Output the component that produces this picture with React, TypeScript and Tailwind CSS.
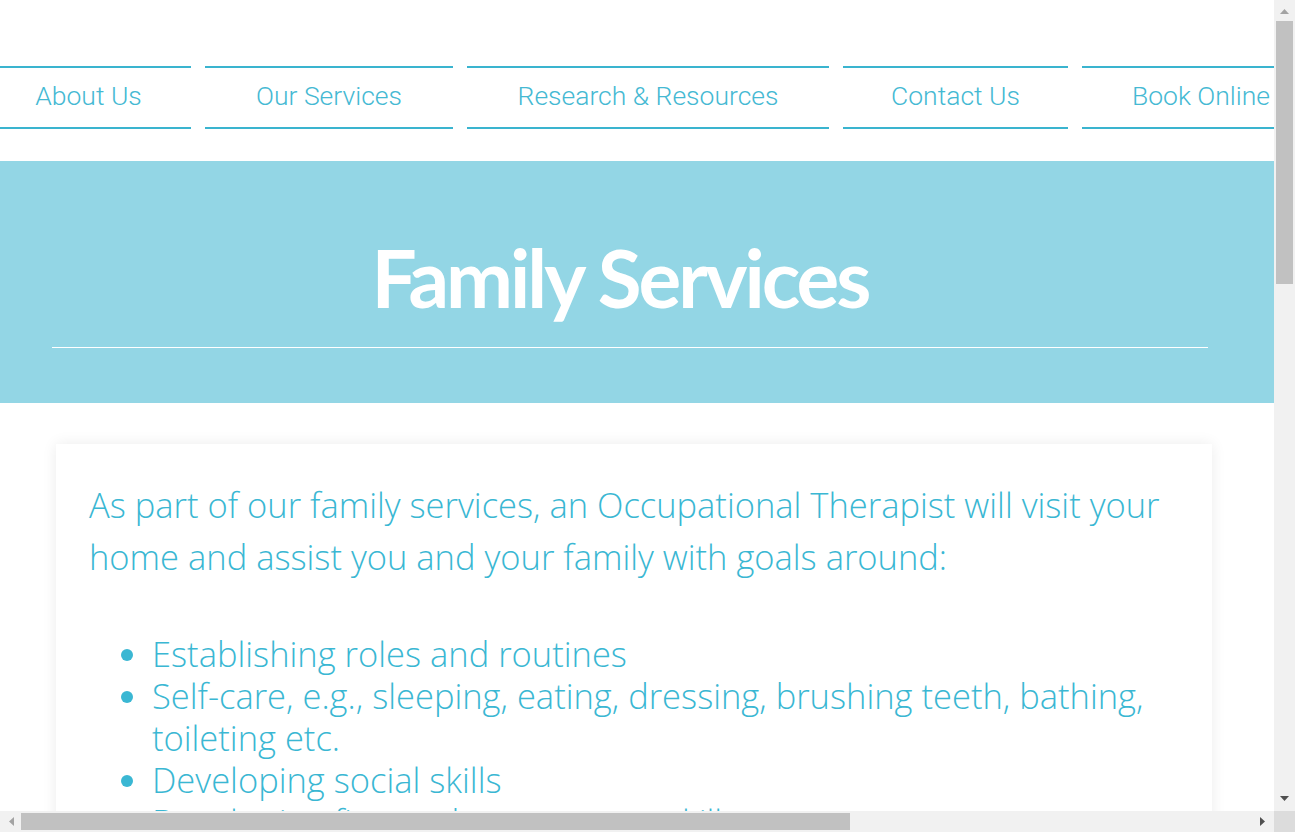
const NAV_ITEMS = [
  { label: 'About Us', width: 'w-[205px]' },
  { label: 'Our Services', width: 'w-[248px]' },
  { label: 'Research & Resources', width: 'w-[362px]' },
  { label: 'Contact Us', width: 'w-[225px]' },
  { label: 'Book Online', width: 'w-[238px]' },
]

const GOALS = [
  'Establishing roles and routines',
  'Self-care, e.g., sleeping, eating, dressing, brushing teeth, bathing, toileting etc.',
  'Developing social skills',
  'Developing fine and gross motor skills',
  'Play and leisure skills',
  'Managing emotions and behaviour',
]

function Arrow({ dir, dark }: { dir: 'up' | 'down' | 'left' | 'right'; dark?: boolean }) {
  const points = {
    up: '0,5 4.5,0 9,5',
    down: '0,0 9,0 4.5,5',
    left: '5,0 5,9 0,4.5',
    right: '0,0 5,4.5 0,9',
  }[dir]
  const vertical = dir === 'up' || dir === 'down'
  return (
    <svg
      width={vertical ? 9 : 5}
      height={vertical ? 5 : 9}
      viewBox={vertical ? '0 0 9 5' : '0 0 5 9'}
      className={dark ? 'fill-[#505050]' : 'fill-[#a3a3a3]'}
    >
      <polygon points={points} />
    </svg>
  )
}

function Page() {
  return (
    <div className="w-[1906px] bg-white font-['Open_Sans',sans-serif]">
      {/* Top navigation */}
      <nav className="-ml-[14px] flex gap-[14px] pt-[66px] font-['Roboto',sans-serif]">
        {NAV_ITEMS.map((item) => (
          <a
            key={item.label}
            href="#"
            className={`${item.width} flex h-[63px] shrink-0 items-center justify-center border-y-2 border-[#3ab4cf] pb-[3px] text-[26.5px] font-light text-[#45b9d3]`}
          >
            {item.label}
          </a>
        ))}
      </nav>

      {/* Hero strip */}
      <section className="mt-[32px] h-[242px] bg-[#93d6e5]">
        <div className="flex w-[1260px] flex-col items-center pt-[68px]">
          <h1 className="pr-[20px] font-['Lato',sans-serif] text-[80px] leading-[96px] font-bold tracking-[-3px] text-white">
            Family Services
          </h1>
          <div className="mx-[52px] mt-[22px] h-px self-stretch bg-white" />
        </div>
      </section>

      {/* Content card */}
      <div className="w-[1268px] px-[56px] pt-[41px]">
        <div className="bg-white px-[33px] pt-[35px] pb-[60px] text-[34.5px] font-light text-[#3ab7d3] shadow-[0_0_14px_rgba(0,0,0,0.08)]">
          <p className="leading-[52px]">
            As part of our family services, an Occupational Therapist will visit your home and assist you and your family with goals around:
          </p>
          <ul className="mt-[50px] list-disc pl-[63px] leading-[42px] marker:text-[#3ab7d3]">
            {GOALS.map((goal) => (
              <li key={goal}>{goal}</li>
            ))}
          </ul>
        </div>
      </div>
    </div>
  )
}

export default function App() {
  return (
    <div className="flex h-[832px] w-[1295px] flex-col overflow-hidden bg-white">
      <div className="flex h-[811px]">
        <div className="w-[1274px] overflow-hidden">
          <Page />
        </div>
        {/* Vertical scrollbar */}
        <div className="flex w-[21px] flex-col items-center bg-[#f1f1f1]">
          <div className="flex h-[21px] items-start pt-[9px]">
            <Arrow dir="up" />
          </div>
          <div className="h-[263px] w-[17px] bg-[#c1c1c1]" />
          <div className="flex-1" />
          <div className="flex h-[21px] items-start pt-[6px]">
            <Arrow dir="down" dark />
          </div>
        </div>
      </div>
      {/* Horizontal scrollbar */}
      <div className="flex h-[21px]">
        <div className="flex w-[1274px] items-center bg-[#f1f1f1]">
          <div className="flex w-[21px] justify-center pl-[1px]">
            <Arrow dir="left" />
          </div>
          <div className="h-[17px] w-[829px] bg-[#c1c1c1]" />
          <div className="flex-1" />
          <div className="flex w-[21px] justify-start pl-[7px]">
            <Arrow dir="right" dark />
          </div>
        </div>
        <div className="w-[21px] bg-[#dcdcdc]" />
      </div>
    </div>
  )
}
